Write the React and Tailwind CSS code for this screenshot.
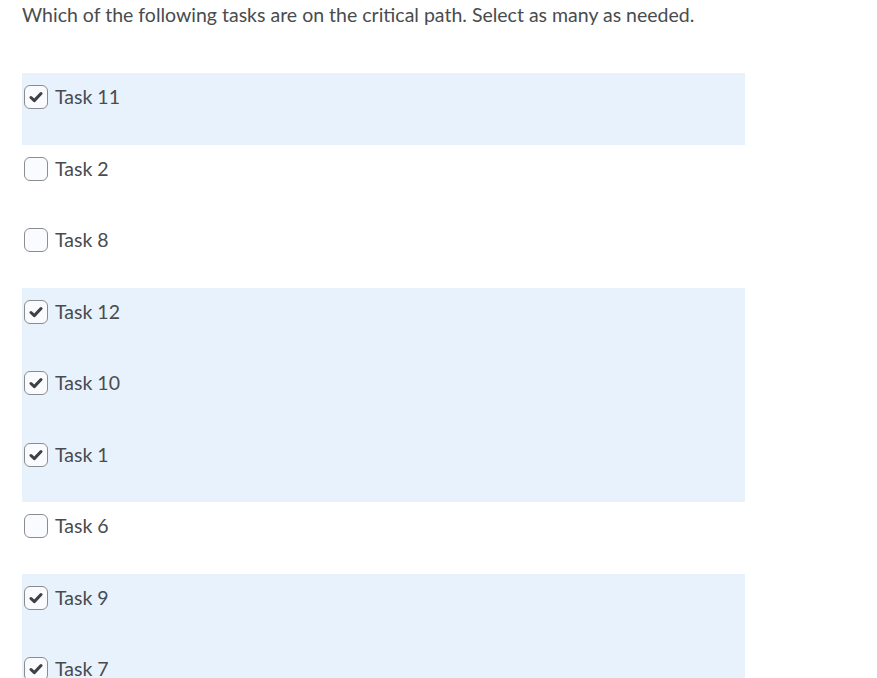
import React from 'react';

const tasks = [
    { label: 'Task 11', checked: true },
    { label: 'Task 2', checked: false },
    { label: 'Task 8', checked: false },
    { label: 'Task 12', checked: true },
    { label: 'Task 10', checked: true },
    { label: 'Task 1', checked: true },
    { label: 'Task 6', checked: false },
    { label: 'Task 9', checked: true },
    { label: 'Task 7', checked: true },
];

const Checkbox = ({ checked }) => (
    <span className="w-[24px] h-[24px] shrink-0 rounded-[6px] border border-[#8a8c8e] bg-[#f9fbff] flex items-center justify-center">
        {checked && (
            <svg width="14" height="12" viewBox="0 0 14 12">
                <path d="M2 6.5 L5.3 9.6 L12 2.5" fill="none" stroke="#3e4042" strokeWidth="3" strokeLinecap="round" strokeLinejoin="round" />
            </svg>
        )}
    </span>
);

const App = () => {
    return (
        <div className="w-[877px] h-[678px] overflow-hidden bg-white text-[#494c4e] font-['Lato',sans-serif]">
            <p className="pl-[22px] pt-[3px] text-[19.5px] leading-[24px]">
                Which of the following tasks are on the critical path. Select as many as needed.
            </p>

            <div className="mt-[46px] ml-[22px] w-[723px]">
                {tasks.map((t) => (
                    <div
                        key={t.label}
                        className={`h-[71.5px] pt-[12px] pl-[2px] flex items-start gap-[7px] ${t.checked ? 'bg-[#e8f2fc]' : 'bg-white'}`}
                    >
                        <Checkbox checked={t.checked} />
                        <span className="text-[19.5px] leading-[24px]">{t.label}</span>
                    </div>
                ))}
            </div>
        </div>
    );
};

export default App;
